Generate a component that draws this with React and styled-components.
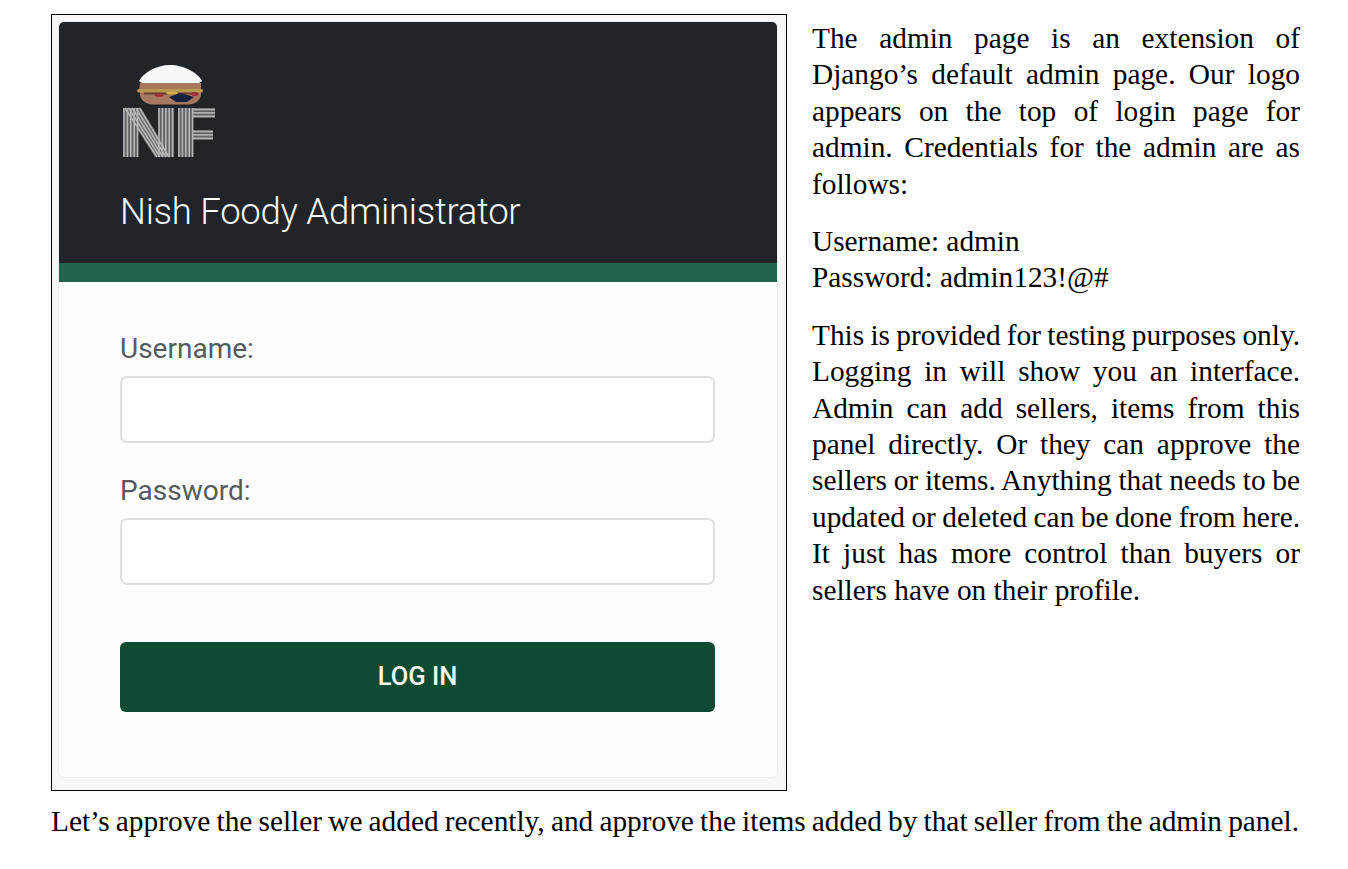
import React from "react";
import styled, { createGlobalStyle } from "styled-components";

const Global = createGlobalStyle`
  html, body { margin: 0; padding: 0; background: #fff; }
  body { font-family: "Liberation Serif", serif; color: #000; }
`;

const Page = styled.main`
  width: 1348px;
  height: 869px;
  box-sizing: border-box;
  padding: 14px 48px 0 51px;
  overflow: hidden;
`;
const TopRow = styled.div`
  display: flex;
  gap: 25px;
  align-items: flex-start;
`;
const Figure = styled.section`
  width: 736px;
  height: 777px;
  flex: none;
  box-sizing: border-box;
  border: 1px solid #000;
  padding: 7px 9px 13px 7px;
  background: #f7f7f7;
`;
const Card = styled.div`
  height: 100%;
  box-sizing: border-box;
  background: #fefefe;
  border-radius: 5px;
  box-shadow: 0 0 0 1px #eeeeee;
  overflow: hidden;
  font-family: Roboto, sans-serif;
`;
const Header = styled.header`
  height: 241px;
  box-sizing: border-box;
  background: #212529;
  padding: 38px 61px 0;
`;
const Title = styled.h1`
  margin: 30px 0 0;
  font-size: 36.5px;
  line-height: 44px;
  font-weight: 300;
  color: #f8f9fa;
  letter-spacing: -0.26px;
  white-space: nowrap;
`;
const Stripe = styled.div`
  height: 19px;
  background: #23644c;
`;
const Form = styled.form`
  padding: 49px 62px 0 61px;
  display: flex;
  flex-direction: column;
`;
const Label = styled.label`
  font-size: 28px;
  line-height: 36px;
  font-weight: 400;
  color: #555a5e;
  margin-bottom: 9px;
`;
const Input = styled.input`
  display: block;
  height: 67px;
  box-sizing: border-box;
  border: 2px solid #dedede;
  border-radius: 7px;
  background: #fff;
  margin-bottom: 30px;
  width: 100%;
`;
const Button = styled.button`
  height: 70px;
  margin-top: 27px;
  padding: 0 0 2px;
  border: 0;
  border-radius: 6px;
  background: #0f4a33;
  color: #f4f7f5;
  font-family: Roboto, sans-serif;
  font-size: 25.5px;
  font-weight: 500;
  text-transform: uppercase;
`;
const Column = styled.article`
  width: 488px;
  padding-top: 6px;
  flex: none;
`;
const Para = styled.p`
  margin: 0 0 21px;
  font-size: 29.33px;
  line-height: 36.4px;
`;
const Line = styled.span`
  display: block;
  white-space: nowrap;
  word-spacing: ${(p) => (p.$last ? "0" : "-3px")};
  text-align: justify;
  text-align-last: ${(p) => (p.$last ? "left" : "justify")};
`;
const Closing = styled.p`
  margin: 12px 0 0;
  font-size: 29.33px;
  line-height: 36.4px;
  white-space: nowrap;
  word-spacing: -3px;
  text-align-last: justify;
  width: 1248px;
`;

function Logo() {
  const stripes = [];
  const pitch = 3.4;
  for (let i = 0; i < 5; i++) {
    const a = 124 + i * pitch;
    stripes.push(<line key={`n1${i}`} x1={a} y1="108" x2={a} y2="157" />);
    const b = 159 + i * pitch;
    stripes.push(<line key={`n2${i}`} x1={b} y1="108" x2={b} y2="157" />);
    const c = 179 + i * pitch;
    stripes.push(<line key={`f1${i}`} x1={c} y1="108" x2={c} y2="157" />);
    stripes.push(
      <line key={`d${i}`} x1={125 + i * 3.6} y1="108" x2={157 + i * 3.0} y2="157" />
    );
  }
  for (let i = 0; i < 3; i++) {
    const t = 109.5 + i * pitch;
    stripes.push(<line key={`f2${i}`} x1="193" y1={t} x2="215" y2={t} />);
    const m = 131.5 + i * pitch;
    stripes.push(<line key={`f3${i}`} x1="193" y1={m} x2="213" y2={m} />);
  }
  return (
    <svg width="100" height="100" viewBox="120 60 100 100" style={{ display: "block" }}>
      <defs>
        <filter id="soft" x="-5%" y="-5%" width="110%" height="110%">
          <feGaussianBlur stdDeviation="0.7" />
        </filter>
      </defs>
      <g filter="url(#soft)">
        <path d="M139 81 C143 73 156 65 170 65 C184 65 198 73 202 81 L199 83 H142 Z" fill="#f8f8f8" />
        <path d="M140 83 H201 L201 92 H139 Z" fill="#a8795f" />
        <path d="M140 92 H201 C202 99 196 104.5 188 104.5 H153 C145 104.5 139 99 140 92 Z" fill="#a8775e" />
        <rect x="137" y="89" width="66" height="3.5" rx="1.7" fill="#b89a4e" />
        <rect x="144" y="92.5" width="52" height="2" fill="#6a4333" />
        <ellipse cx="159" cy="95" rx="4.5" ry="1.8" fill="#9e2f37" />
        <ellipse cx="195" cy="94" rx="3.5" ry="2" fill="#9e2f37" />
        <ellipse cx="172" cy="93" rx="6" ry="1.6" fill="#d2b253" />
        <path d="M169 97 L180 93 L194 97 L187 102 L176 102 Z" fill="#16213c" />
        <g fill="#606366">
          <rect x="123" y="108" width="15" height="49" />
          <rect x="158" y="108" width="16" height="49" />
          <polygon points="124,108 141,108 171,157 155,157" />
          <rect x="178" y="108" width="15" height="49" />
          <rect x="193" y="108" width="22" height="10" />
          <rect x="193" y="130" width="20" height="10" />
        </g>
        <g stroke="#b4b6b8" strokeWidth="1.6" fill="none">
          {stripes}
        </g>
      </g>
    </svg>
  );
}

const intro = [
  "The admin page is an extension of",
  "Django’s default admin page. Our logo",
  "appears on the top of login page for",
  "admin. Credentials for the admin are as",
];
const body = [
  "This is provided for testing purposes only.",
  "Logging in will show you an interface.",
  "Admin can add sellers, items from this",
  "panel directly. Or they can approve the",
  "sellers or items. Anything that needs to be",
  "updated or deleted can be done from here.",
  "It just has more control than buyers or",
];

export default function App() {
  return (
    <Page>
      <Global />
      <TopRow>
        <Figure>
          <Card>
            <Header>
              <Logo />
              <Title>Nish Foody Administrator</Title>
            </Header>
            <Stripe />
            <Form>
              <Label>Username:</Label>
              <Input type="text" />
              <Label>Password:</Label>
              <Input type="password" />
              <Button type="button">Log in</Button>
            </Form>
          </Card>
        </Figure>
        <Column>
          <Para>
            {intro.map((t) => (
              <Line key={t}>{t}</Line>
            ))}
            <Line $last>follows:</Line>
          </Para>
          <Para>
            <Line $last>Username: admin</Line>
            <Line $last>Password: admin123!@#</Line>
          </Para>
          <Para>
            {body.map((t) => (
              <Line key={t}>{t}</Line>
            ))}
            <Line $last>sellers have on their profile.</Line>
          </Para>
        </Column>
      </TopRow>
      <Closing>
        Let’s approve the seller we added recently, and approve the items added by that seller from the admin panel.
      </Closing>
    </Page>
  );
}
